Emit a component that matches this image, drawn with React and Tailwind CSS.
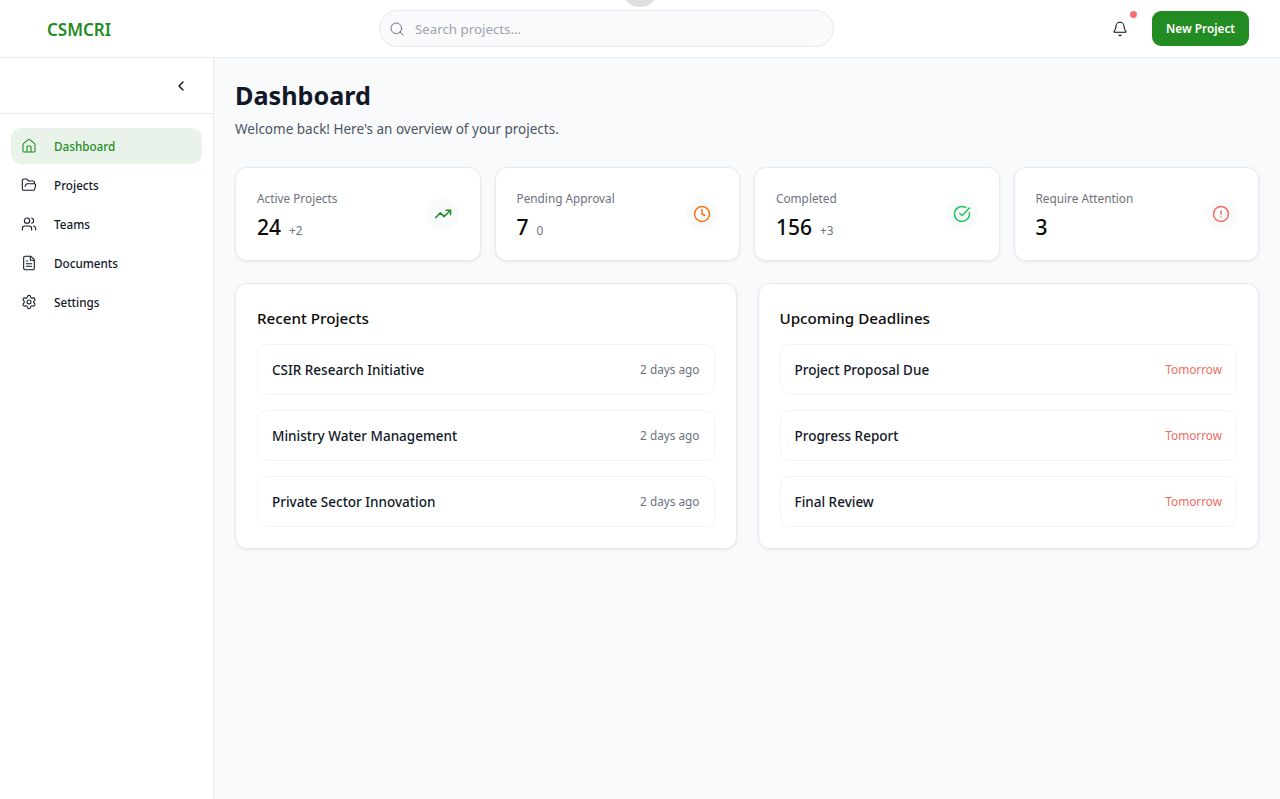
import React from "react";
import { House, FolderOpen, Users, FileText, Settings, ChevronLeft, Search, Bell, TrendingUp, Clock, CircleCheckBig, CircleAlert } from "lucide-react";

const nav = [
  { label: "Dashboard", Icon: House, active: true },
  { label: "Projects", Icon: FolderOpen },
  { label: "Teams", Icon: Users },
  { label: "Documents", Icon: FileText },
  { label: "Settings", Icon: Settings },
];

const stats = [
  { label: "Active Projects", value: "24", delta: "+2", Icon: TrendingUp, color: "text-[#228b22]" },
  { label: "Pending Approval", value: "7", delta: "0", Icon: Clock, color: "text-[#f97316]" },
  { label: "Completed", value: "156", delta: "+3", Icon: CircleCheckBig, color: "text-[#22c55e]" },
  { label: "Require Attention", value: "3", delta: "", Icon: CircleAlert, color: "text-[#ef6b5f]" },
];

const recent = ["CSIR Research Initiative", "Ministry Water Management", "Private Sector Innovation"];
const deadlines = ["Project Proposal Due", "Progress Report", "Final Review"];

function Panel({ title, items, meta, metaClass }) {
  return (
    <section className="rounded-[12px] border border-[#e8eaed] bg-white px-[21px] pt-[21px] pb-[21px] shadow-[0_1px_3px_rgba(0,0,0,0.08)]">
      <h2 className="mb-[12px] text-[15.2px] leading-[27px] font-medium text-[#0a0a0a]">{title}</h2>
      <div className="flex flex-col gap-[15px]">
        {items.map((t) => (
          <div key={t} className="flex h-[51px] items-center justify-between rounded-[10px] border border-[#f3f4f6] bg-white px-[14px]">
            <span className="pt-[1px] text-[13.5px] font-medium text-[#111827]">{t}</span>
            <span className={`pt-[1px] text-[11.8px] ${metaClass}`}>{meta}</span>
          </div>
        ))}
      </div>
    </section>
  );
}

export default function App() {
  return (
    <div className="relative flex h-[799px] w-[1280px] flex-col overflow-hidden bg-white font-['Noto_Sans','Open_Sans',sans-serif] text-[#0a0a0a]">
      <header className="flex h-[58px] shrink-0 items-center border-b border-[#e8e9ec] bg-white pr-[31px] pl-[47px]">
        <div className="w-[332px] pt-[2px] text-[17px] leading-none font-semibold text-[#228b22]">CSMCRI</div>
        <div className="flex h-[37px] w-[455px] items-center gap-[10px] rounded-full border border-[#e5e7eb] bg-[#f9fafb] px-[9px]">
          <Search size={16} className="text-[#6b7280]" strokeWidth={1.5} />
          <span className="pt-[2px] text-[13.3px] text-[#9ca3af]">Search projects...</span>
        </div>
        <div className="ml-auto flex items-center gap-[24px]">
          <div className="relative flex h-[16px] w-[16px] items-center justify-center">
            <Bell size={16} strokeWidth={1.6} className="text-[#0a0a0a]" />
            <span className="absolute top-[-10px] left-[18px] h-[7px] w-[7px] rounded-full bg-[#f87171]" />
          </div>
          <button className="h-[35px] w-[97px] rounded-[9px] bg-[#228b22] pt-[1px] text-[11.8px] font-semibold text-white">New Project</button>
        </div>
      </header>
      <div className="absolute top-[-29px] left-[622px] h-[36px] w-[36px] rounded-full bg-[#dfdfe1]" />

      <div className="flex min-h-0 flex-1">
        <aside className="w-[214px] shrink-0 border-r border-[#e8e9ec] bg-white">
          <div className="flex h-[56px] items-center justify-end border-b border-[#e8e9ec] pr-[24px]">
            <ChevronLeft size={16} strokeWidth={2} className="text-[#0a0a0a]" />
          </div>
          <nav className="flex flex-col gap-[3px] px-[11px] pt-[14px]">
            {nav.map(({ label, Icon, active }) => (
              <div key={label} className={`flex h-[36px] items-center gap-[17px] rounded-[10px] pl-[10px] text-[11.7px] font-medium ${active ? "bg-[#e9f3e9] text-[#228b22]" : "text-[#111827]"}`}>
                <Icon size={16} strokeWidth={1.6} />
                <span className="pt-[1px]">{label}</span>
              </div>
            ))}
          </nav>
        </aside>

        <main className="min-w-0 flex-1 bg-[#f9fafb] px-[21px] pt-[20px]">
          <h1 className="text-[25.2px] leading-[35px] font-bold text-[#111827]">Dashboard</h1>
          <p className="mt-[6px] text-[13.5px] leading-[21px] text-[#4b5563]">Welcome back! Here's an overview of your projects.</p>

          <div className="mt-[27px] grid grid-cols-4 gap-[14px]">
            {stats.map(({ label, value, delta, Icon, color }) => (
              <div key={label} className="flex h-[94px] items-center justify-between rounded-[12px] border border-[#e8eaed] bg-white pr-[21px] pl-[21px] shadow-[0_1px_3px_rgba(0,0,0,0.08)]">
                <div className="pt-[1px]">
                  <div className="text-[11.8px] leading-[18px] text-[#6b7280]">{label}</div>
                  <div className="mt-[6px] flex items-baseline gap-[8px]">
                    <span className="text-[21px] leading-[28px] font-medium text-[#0a0a0a]">{value}</span>
                    {delta && <span className="text-[11.8px] leading-[18px] text-[#6b7280]">{delta}</span>}
                  </div>
                </div>
                <div className="flex h-[32px] w-[32px] items-center justify-center rounded-full bg-[#f9fafb]">
                  <Icon size={18} strokeWidth={2} className={color} />
                </div>
              </div>
            ))}
          </div>

          <div className="mt-[22px] grid grid-cols-2 gap-[21px]">
            <Panel title="Recent Projects" items={recent} meta="2 days ago" metaClass="text-[#6b7280]" />
            <Panel title="Upcoming Deadlines" items={deadlines} meta="Tomorrow" metaClass="text-[#ef6b5f]" />
          </div>
        </main>
      </div>
    </div>
  );
}
